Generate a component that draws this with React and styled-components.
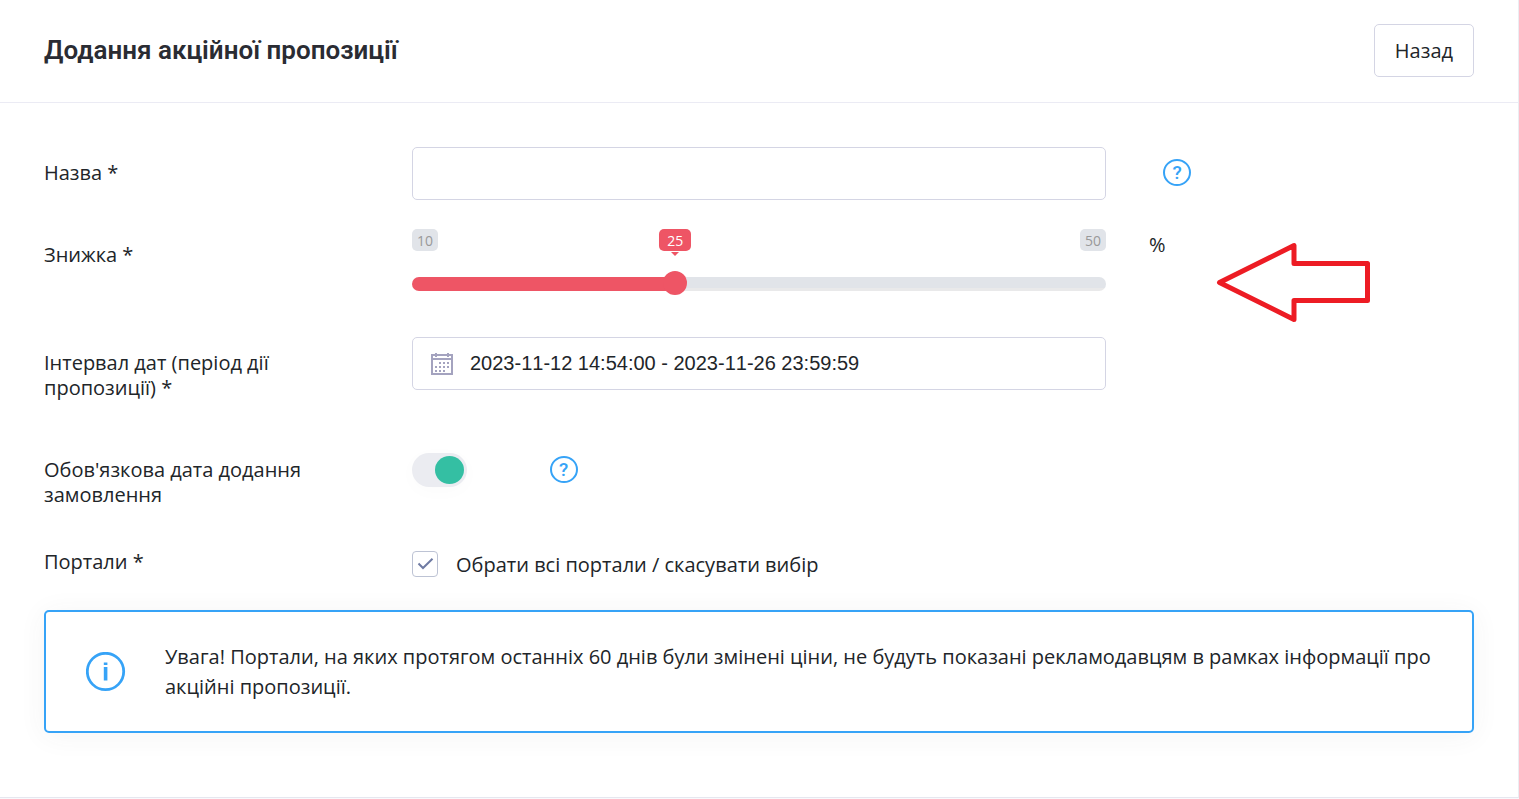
import React, { useState } from "react";
import styled, { createGlobalStyle } from "styled-components";

const BLUE = "#36a3f7";
const RED = "#ee5565";
const BORDER = "#d4d5e4";
const TEXT = "#212529";

const GlobalStyle = createGlobalStyle`
  *, *::before, *::after { box-sizing: border-box; }
  body {
    margin: 0;
    background: #f9f9fc;
    color: ${TEXT};
    font-family: "Open Sans", "Noto Sans", sans-serif;
    font-size: 20px;
    font-weight: 400;
    font-kerning: none;
  }
`;

const Portlet = styled.main`
  background: #fff;
  border-right: 1px solid #ebedf2;
  border-bottom: 1px solid #e6e7ef;
`;

const Header = styled.header`
  display: flex;
  justify-content: space-between;
  align-items: center;
  padding: 24px 44px 25px;
  border-bottom: 1px solid #ebebf4;
`;

const Title = styled.h1`
  margin: 0;
  font-family: Roboto, sans-serif;
  font-size: 26px;
  font-weight: 600;
  font-kerning: auto;
  line-height: 32px;
  padding-bottom: 2px;
  color: #2a2c33;
`;

const BackButton = styled.button`
  height: 53px;
  padding: 0 20px;
  border: 1px solid ${BORDER};
  border-radius: 5px;
  background: #fff;
  color: ${TEXT};
  font: inherit;
  cursor: pointer;
`;

const Form = styled.form`
  display: flex;
  flex-direction: column;
  gap: 29px;
  padding: 44px 44px 64px;
`;

const Row = styled.div`
  display: grid;
  grid-template-columns: repeat(12, minmax(0, 1fr));
  column-gap: 42px;
  align-items: start;
  min-height: ${(p) => p.$minHeight || 0}px;
`;

const Cell = styled.div`
  position: relative;
  grid-column: span ${(p) => p.$span};
  padding-top: ${(p) => p.$top || 0}px;
  padding-left: ${(p) => p.$left || 0}px;
`;

const Label = styled.label`
  grid-column: span 3;
  padding-top: 13px;
  line-height: 25px;
`;

const InputBox = styled.div`
  display: flex;
  align-items: center;
  gap: 17px;
  height: 53px;
  padding: 0 18px;
  border: 1px solid ${BORDER};
  border-radius: 5px;
`;

const TextInput = styled.input`
  flex: 1;
  min-width: 0;
  height: 100%;
  padding: 0;
  border: 0;
  outline: 0;
  background: transparent;
  color: ${TEXT};
  font-family: "Liberation Sans", Arial, sans-serif;
  font-size: 20px;
  font-kerning: none;
`;

const HelpButton = styled.button`
  display: flex;
  align-items: center;
  justify-content: center;
  width: 28px;
  height: 27px;
  padding: 1px 0 0;
  border: 2px solid ${BLUE};
  border-radius: 50%;
  background: transparent;
  color: ${BLUE};
  font-family: Roboto, sans-serif;
  font-size: 19px;
  font-weight: 500;
  line-height: 22px;
  cursor: pointer;
`;

const Scale = styled.div`
  position: relative;
  display: flex;
  justify-content: space-between;
  margin-bottom: 21px;
`;

const Mark = styled.span`
  height: 22px;
  padding: 0 5px;
  border-radius: 5px;
  background: #e1e4e9;
  color: #999;
  font-size: 14px;
  line-height: 23px;
`;

const ValueMark = styled.output`
  position: absolute;
  top: 0;
  transform: translateX(-50%);
  height: 22px;
  padding: 0 8px;
  border-radius: 5px;
  background: ${RED};
  color: #fff;
  font-size: 14px;
  line-height: 23px;

  &::after {
    content: "";
    position: absolute;
    top: 23px;
    left: 50%;
    margin-left: -4px;
    border: 4px solid transparent;
    border-top-color: ${RED};
    border-bottom: 0;
  }
`;

const Range = styled.input`
  appearance: none;
  display: block;
  width: 100%;
  height: 24px;
  margin: 0;
  background: transparent;
  cursor: pointer;

  &::-webkit-slider-runnable-track {
    height: 14px;
    border-radius: 7px;
    background:
      linear-gradient(${RED}, ${RED}) 0 0 / var(--fill) 100% no-repeat,
      linear-gradient(#e1e4e9 11px, #e9e9ea 11px);
  }

  &::-webkit-slider-thumb {
    appearance: none;
    width: 24px;
    height: 24px;
    margin-top: -6px;
    border: 0;
    border-radius: 50%;
    background: ${RED};
  }
`;

const Unit = styled.span`
  display: block;
  padding-left: 1px;
  line-height: 32px;
`;

const Pointer = styled.svg`
  position: absolute;
  top: 12px;
  left: 68px;
`;

const Switch = styled.input`
  appearance: none;
  display: block;
  width: 55px;
  height: 34px;
  margin: 0;
  padding: 3px;
  border-radius: 17px;
  background: #ebecf1;
  box-shadow: 0 4px 20px rgba(60, 60, 60, 0.02);
  cursor: pointer;

  &::before {
    content: "";
    display: block;
    width: 29px;
    height: 28px;
    border-radius: 50%;
    background: #fff;
  }

  &:checked::before {
    margin-left: 20px;
    background: #34bfa3;
  }
`;

const CheckLabel = styled.label`
  display: flex;
  align-items: center;
  gap: 18px;
  height: 26px;
  cursor: pointer;
`;

const CheckWrap = styled.span`
  position: relative;
  display: flex;
`;

const CheckMark = styled.svg`
  position: absolute;
  top: 0;
  left: 0;
  display: none;
  pointer-events: none;
`;

const CheckBox = styled.input`
  appearance: none;
  width: 26px;
  height: 26px;
  margin: 0;
  border: 1px solid #bdc3d4;
  border-radius: 4px;

  &:checked + ${CheckMark} { display: block; }
`;

const Alert = styled.section`
  display: flex;
  align-items: center;
  gap: 39px;
  min-height: 123px;
  padding: 29px 39px 29px 40px;
  border: 2px solid ${BLUE};
  border-radius: 5px;
  background: #fff;
  box-shadow: 0 3px 28px rgba(60, 60, 60, 0.06);
`;

const AlertIcon = styled.svg`
  flex: none;
`;

const AlertText = styled.p`
  margin: 0;
  line-height: 30px;
`;

const DOTS = [
  [7, 9], [11, 9], [15, 9],
  [3, 13], [7, 13], [11, 13], [15, 13],
  [3, 17], [7, 17], [11, 17],
];

function CalendarIcon() {
  return (
    <svg width="22" height="22" viewBox="0 0 22 22" fill="#a4a3bf" aria-hidden="true">
      <path fillRule="evenodd" d="M0 1h22v21H0zM2 3v2h18V3zM2 7v13h18V7z" />
      <path d="M4 0h2v4H4zM16 0h2v4h-2z" />
      {DOTS.map(([x, y]) => (
        <rect key={x + "-" + y} x={x + 1} y={y} width="2" height="2" />
      ))}
    </svg>
  );
}

const MIN = 10;
const MAX = 50;

export default function App() {
  const [name, setName] = useState("");
  const [discount, setDiscount] = useState(25);
  const [dates, setDates] = useState("2023-11-12 14:54:00 - 2023-11-26 23:59:59");
  const [required, setRequired] = useState(true);
  const [all, setAll] = useState(true);
  const ratio = (discount - MIN) / (MAX - MIN);
  const at = `calc(12px + (100% - 24px) * ${ratio})`;

  return (
    <>
      <GlobalStyle />
      <Portlet>
        <Header>
          <Title>Додання акційної пропозиції</Title>
          <BackButton type="button">Назад</BackButton>
        </Header>
        <Form onSubmit={(e) => e.preventDefault()}>
          <Row>
            <Label htmlFor="name">Назва *</Label>
            <Cell $span={6}>
              <InputBox>
                <TextInput id="name" type="text" value={name} onChange={(e) => setName(e.target.value)} />
              </InputBox>
            </Cell>
            <Cell $span={3} $top={12} $left={15}>
              <HelpButton type="button">?</HelpButton>
            </Cell>
          </Row>

          <Row $minHeight={79}>
            <Label htmlFor="discount">Знижка *</Label>
            <Cell $span={6}>
              <Scale>
                <Mark>{MIN}</Mark>
                <Mark>{MAX}</Mark>
                <ValueMark htmlFor="discount" style={{ left: at }}>{discount}</ValueMark>
              </Scale>
              <Range
                id="discount"
                type="range"
                min={MIN}
                max={MAX}
                value={discount}
                onChange={(e) => setDiscount(Number(e.target.value))}
                style={{ "--fill": at }}
              />
            </Cell>
            <Cell $span={3}>
              <Unit>%</Unit>
              <Pointer width="156" height="84" viewBox="0 0 156 84" aria-hidden="true">
                <path
                  d="M3.500 41.500 L78 4.500 V22.500 H151.500 V59.500 H78 V78.500 Z"
                  fill="none"
                  stroke="#ed1c24"
                  strokeWidth="5"
                  strokeLinejoin="round"
                />
              </Pointer>
            </Cell>
          </Row>

          <Row $minHeight={78}>
            <Label htmlFor="dates">Інтервал дат (період дії пропозиції) *</Label>
            <Cell $span={6}>
              <InputBox>
                <CalendarIcon />
                <TextInput id="dates" type="text" value={dates} onChange={(e) => setDates(e.target.value)} />
              </InputBox>
            </Cell>
          </Row>

          <Row>
            <Label htmlFor="required">Обов'язкова дата додання замовлення</Label>
            <Cell $span={1} $top={9}>
              <Switch id="required" type="checkbox" role="switch" checked={required} onChange={(e) => setRequired(e.target.checked)} />
            </Cell>
            <Cell $span={1} $top={12} $left={15}>
              <HelpButton type="button">?</HelpButton>
            </Cell>
          </Row>

          <Row $minHeight={45}>
            <Label as="span">Портали *</Label>
            <Cell $span={6} $top={15}>
              <CheckLabel>
                <CheckWrap>
                  <CheckBox type="checkbox" checked={all} onChange={(e) => setAll(e.target.checked)} />
                  <CheckMark width="26" height="26" viewBox="0 0 26 26" fill="none" aria-hidden="true">
                    <path d="M6.500 12.500 L11 17 L20.500 7.800" stroke="#6f7ba3" strokeWidth="2" />
                  </CheckMark>
                </CheckWrap>
                Обрати всі портали / скасувати вибір
              </CheckLabel>
            </Cell>
          </Row>

          <Alert>
            <AlertIcon width="40" height="40" viewBox="0 0 40 40" aria-hidden="true">
              <circle cx="19.500" cy="19.500" r="18.200" fill="none" stroke={BLUE} strokeWidth="2.800" />
              <path d="M17.800 10.500h3.600v2.600h-3.600zM17.800 15h3.600v13.500h-3.600z" fill={BLUE} />
            </AlertIcon>
            <AlertText>
              Увага! Портали, на яких протягом останніх 60 днів були змінені ціни, не будуть показані рекламодавцям в рамках інформації про акційні пропозиції.
            </AlertText>
          </Alert>
        </Form>
      </Portlet>
    </>
  );
}
